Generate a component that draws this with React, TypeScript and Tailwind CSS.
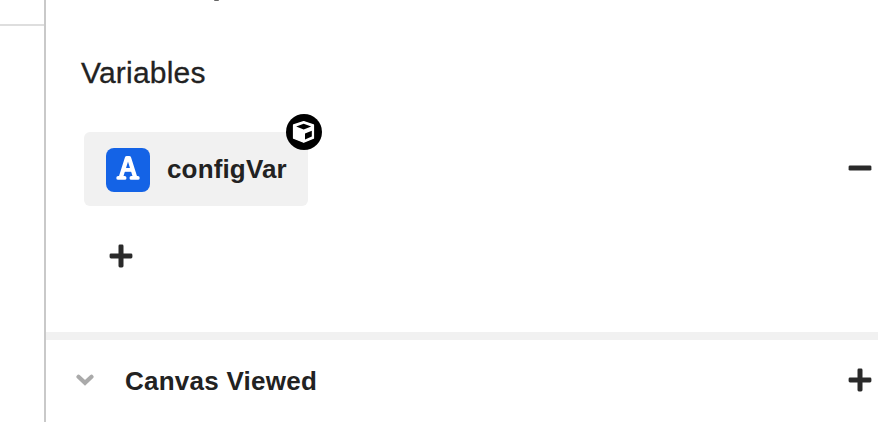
function Plus() {
  return (
    <svg viewBox="0 0 24 24" className="block size-6 shrink-0" fill="#2a2a2a">
      <rect x="0.6" y="9.5" width="22.8" height="5" rx="1.4" />
      <rect x="9.5" y="0.6" width="5" height="22.8" rx="1.4" />
    </svg>
  );
}

function Minus() {
  return (
    <svg viewBox="0 0 24 6" className="mb-0.5 block h-1.5 w-6 shrink-0" fill="#2a2a2a">
      <rect x="0.6" y="0.4" width="22.8" height="5.2" rx="1.4" />
    </svg>
  );
}

function TextTypeIcon() {
  return (
    <svg viewBox="0 0 24 24" className="mb-1 mr-[1px] block size-6" fill="none" stroke="#fff">
      <path d="M4.8 21.5 L10.9 2.2 H13.1 L19.2 21.5" strokeWidth="4.2" strokeLinejoin="round" />
      <path d="M7.5 13.9 H16.5" strokeWidth="3.8" />
      <path d="M2.2 21.9 H8.6 M15.4 21.9 H21.8" strokeWidth="3.8" strokeLinecap="round" />
    </svg>
  );
}

function CubeBadge() {
  return (
    <span className="absolute -top-[18px] -right-[14px] size-9 rounded-full bg-black">
      <svg viewBox="0 0 36 36" className="block size-9">
        <path
          d="M17.7 7.6 L27.4 11 V24.2 L17.7 28.2 L7.6 24.2 V11 Z"
          fill="#fff"
          stroke="#fff"
          strokeWidth="1.4"
          strokeLinejoin="round"
        />
        <path d="M17.7 9.8 L25.2 12.5 L17.7 15.5 L10.2 12.5 Z" fill="#000" />
        <path d="M19 19.6 L25.8 16.8 V22.6 L19 25.6 Z" fill="#000" />
      </svg>
    </span>
  );
}

function VariableChip({ name }: { name: string }) {
  return (
    <div className="relative flex h-[74px] w-56 items-center rounded-md bg-[#f1f1f1] pl-[22px]">
      <span className="mt-0.5 flex size-11 shrink-0 items-center justify-center rounded-lg bg-[#1463e6]">
        <TextTypeIcon />
      </span>
      <span className="ml-[17px] whitespace-nowrap text-[26px] font-bold leading-[30px] tracking-[0.15px]">
        {name}
      </span>
      <CubeBadge />
    </div>
  );
}

export default function App() {
  return (
    <div className="flex h-[422px] w-[878px] overflow-hidden bg-white font-['Liberation_Sans',Arial,sans-serif] text-[#222]">
      <aside className="w-[46px] shrink-0 border-r-2 border-[#c9c9c9]">
        <div className="h-[26px] border-b-2 border-[#dedede]" />
      </aside>
      <main className="flex min-w-0 flex-1 flex-col">
        <section className="h-[332px]">
          <div className="ml-[168px] h-px w-[5px] rounded-b-full bg-[#666]" />
          <h2 className="ml-[35px] mt-[55px] text-[30px] leading-[34px] tracking-[0.2px] [-webkit-text-stroke:0.3px_#222]">
            Variables
          </h2>
          <div className="mt-[42px] flex items-center justify-between pl-[38px] pr-1.5">
            <VariableChip name="configVar" />
            <Minus />
          </div>
          <div className="mt-[38px] pl-[63px]">
            <Plus />
          </div>
        </section>
        <div className="h-2 bg-[#f1f1f1]" />
        <section className="flex h-20 items-center pl-[30px] pr-1.5">
          <svg viewBox="0 0 18 12" className="block h-3 w-[18px] shrink-0" fill="none">
            <path d="M2.5 2.8 L9 8.8 L15.5 2.8" stroke="#aaa" strokeWidth="4.2" strokeLinecap="round" />
          </svg>
          <h3 className="ml-[31px] mt-0.5 flex-1 text-[26px] font-bold leading-[30px] tracking-[0.25px]">
            Canvas Viewed
          </h3>
          <Plus />
        </section>
      </main>
    </div>
  );
}
